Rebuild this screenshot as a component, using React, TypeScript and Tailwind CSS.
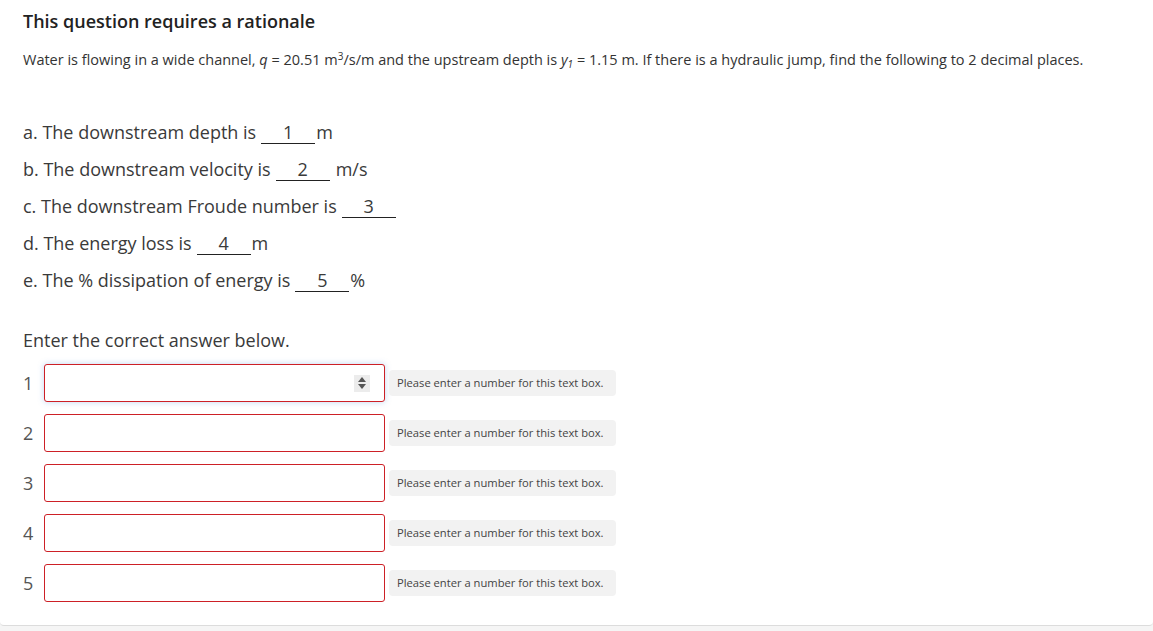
import React from 'react';

// ── Question parts ────────────────────────────────────────────────────────────
const PARTS = [
    { label: 'a. The downstream depth is', n: '1', unit: 'm', gap: false },
    { label: 'b. The downstream velocity is', n: '2', unit: 'm/s', gap: true },
    { label: 'c. The downstream Froude number is', n: '3', unit: '', gap: false },
    { label: 'd. The energy loss is', n: '4', unit: 'm', gap: false },
    { label: 'e. The % dissipation of energy is', n: '5', unit: '%', gap: false },
];

const Blank: React.FC<{ n: string }> = ({ n }) => (
    <span className="inline-block w-[54px] border-b border-[#222] text-center leading-[22px] ml-[5px]">{n}</span>
);

const Spinner: React.FC = () => (
    <div className="w-[16px] h-[17px] bg-[#ececec] flex flex-col items-center justify-center gap-[2px]">
        <svg width="8" height="5" viewBox="0 0 8 5"><path d="M4 0 L8 5 L0 5 Z" fill="#555" /></svg>
        <svg width="8" height="5" viewBox="0 0 8 5"><path d="M0 0 L8 0 L4 5 Z" fill="#555" /></svg>
    </div>
);

export default function App() {
    return (
        <div className="w-[1153px] h-[631px] bg-[#f5f5f5] font-['Open_Sans',_'Noto_Sans',sans-serif] text-[#333]">
            <div className="bg-white h-[626px] border-b border-[#dcdcdc] rounded-b-[4px] px-[23px] pt-[9px]">
                <h2 className="text-[18px] font-semibold text-[#222] leading-[24px]">This question requires a rationale</h2>
                <p className="text-[14.5px] leading-[20px] mt-[17px] text-[#333]">
                    Water is flowing in a wide channel, <i>q</i> = 20.51 m<sup className="text-[10px]">3</sup>/s/m and the upstream depth is <i>y</i><sub className="text-[10px] italic">1</sub> = 1.15 m. If there is a hydraulic jump, find the following to 2 decimal places.
                </p>

                {/* Parts a–e */}
                <div className="mt-[51px] flex flex-col gap-[15px] text-[18px] text-[#3a3a3a]">
                    {PARTS.map((p) => (
                        <div key={p.n} className="leading-[22px] h-[22px]">
                            {p.label}
                            <Blank n={p.n} />
                            {p.unit && <span className={p.gap ? 'ml-[6px]' : 'ml-[1px]'}>{p.unit}</span>}
                        </div>
                    ))}
                </div>

                <p className="mt-[37px] text-[18px] leading-[24px] text-[#3a3a3a]">Enter the correct answer below.</p>

                {/* Answer inputs */}
                <div className="mt-[12px] flex flex-col gap-[12px]">
                    {[1, 2, 3, 4, 5].map((i) => (
                        <div key={i} className="flex items-center h-[38px]">
                            <span className="w-[21px] text-[18px] text-[#555] leading-none">{i}</span>
                            <div
                                className={
                                    i === 1
                                        ? 'w-[341px] h-[38px] border border-[#cd2026] rounded-[3px] bg-white flex items-center justify-end pr-[14px] shadow-[0_0_6px_rgba(80,140,220,0.35)]'
                                        : 'w-[341px] h-[38px] border border-[#cd2026] rounded-[3px] bg-white'
                                }
                            >
                                {i === 1 && <Spinner />}
                            </div>
                            <div className="ml-[4px] h-[26px] w-[227px] bg-[#f2f2f2] rounded-[4px] flex items-center pl-[8px] text-[11.2px] text-[#444]">
                                Please enter a number for this text box.
                            </div>
                        </div>
                    ))}
                </div>
            </div>
        </div>
    );
}
